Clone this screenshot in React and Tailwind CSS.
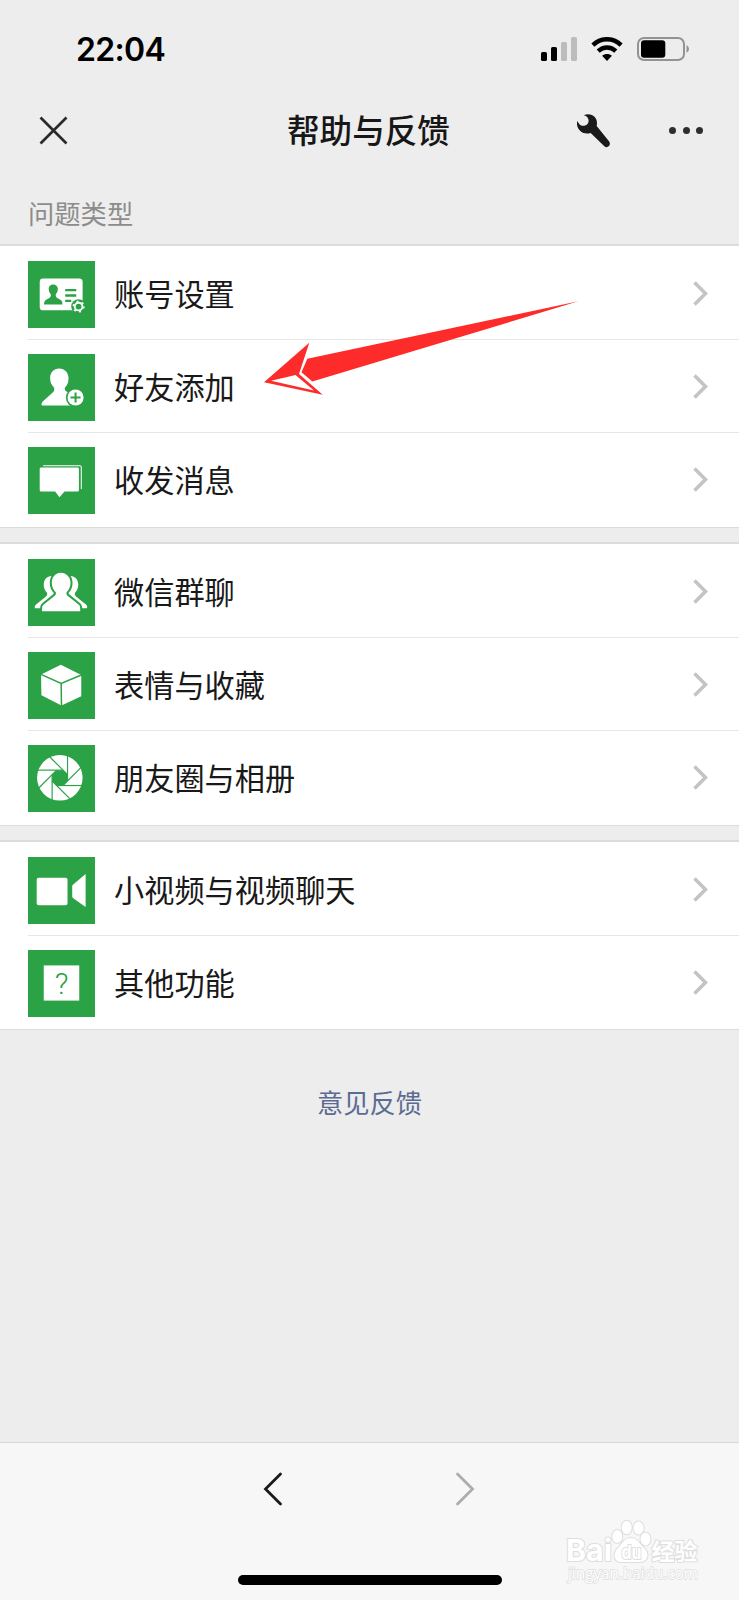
import React from 'react'

const GREEN = '#2ba245'

const AccountIcon = () => (
  <>
    <rect x="35" y="52" width="128" height="95" rx="10" fill="#fff" />
    <path d="M75 70c-9 0-14 7-13 16 1 7 3 10 6 13 1 6-1 10-7 13-8 4-13 6-13 18h55c0-12-5-14-13-18-6-3-8-7-7-13 3-3 5-6 6-13 1-9-5-16-14-16z" fill={GREEN} />
    <path d="M111 87h33M111 103h33M111 119h18" stroke={GREEN} strokeWidth="7" />
    <circle cx="151" cy="136" r="22" fill={GREEN} />
    <circle cx="151" cy="136" r="11.500" fill="none" stroke="#fff" strokeWidth="5.500" />
    <circle cx="151" cy="136" r="15.500" fill="none" stroke="#fff" strokeWidth="5" strokeDasharray="6 10.230" />
  </>
)

const AddFriendIcon = () => (
  <>
    <path d="M93 43c-17 0-27 13-27 29 0 14 5 22 12 29 1 7 0 11-5 15l-29 26c-4 4-5 12-1 12h96v-30l-24-12c-5-3-6-6-5-11 7-7 11-15 11-29 0-16-11-29-28-29z" fill="#fff" />
    <circle cx="142" cy="130" r="29" fill={GREEN} />
    <circle cx="142" cy="130" r="24" fill="#fff" />
    <path d="M142 115v30M127 130h30" stroke={GREEN} strokeWidth="6" />
  </>
)

const MessageIcon = () => (
  <>
    <path d="M45 56h110q4 0 4 4v65" fill="none" stroke="#fff" strokeWidth="3" />
    <path d="M39 61h109q4 0 4 4v64q0 4-4 4h-39l-15 17-13-17H39q-4 0-4-4V65q0-4 4-4z" fill="#fff" />
  </>
)

const GroupIcon = () => (
  <>
    <path d="M71 51c-15 0-24 11-24 26 0 10 4 18 9 23 3 6 1 9-5 14l-27 22c-4 3-5 11-2 11h58V51z" fill="#fff" />
    <path d="M126 51c15 0 24 11 24 26 0 10-4 18-9 23-3 6-1 9 5 14l27 22c4 3 5 11 2 11h-58V51z" fill="#fff" />
    <path d="M98 41c-16 0-27 13-27 30 0 13 5 22 12 28 1 5 0 8-5 12l-31 25c-5 4-5 8-5 20h114c0-12 0-16-5-20l-31-25c-5-4-6-7-5-12 7-6 12-15 12-28 0-17-13-30-29-30z" fill="#fff" stroke={GREEN} strokeWidth="12" paintOrder="stroke" />
  </>
)

const BoxIcon = () => (
  <>
    <path d="M98 38l61 31v63l-59 28-60-31-1-62z" fill="#fff" />
    <path d="M37 66l62 28 62-26M99 94l1 68" fill="none" stroke={GREEN} strokeWidth="4.500" />
  </>
)

const ShutterIcon = () => (
  <g transform="translate(95 98)">
    <circle r="68" fill="#fff" />
    <path d="M-9.500 -23H9.500L23 -9.500V9.500L9.500 23H-9.500L-23 9.500V-9.500Z" fill={GREEN} />
    {[0, 45, 90, 135, 180, 225, 270, 315].map((deg) => (
      <path key={deg} d="M-68 -23H9.500" stroke={GREEN} strokeWidth="3.500" transform={`rotate(${deg})`} />
    ))}
  </g>
)

const VideoIcon = () => (
  <>
    <rect x="26" y="62" width="92" height="82" rx="6" fill="#fff" />
    <path d="M172 51v98l-37-26q-3-2-3-5V87q0-3 3-5z" fill="#fff" />
  </>
)

const OtherIcon = () => (
  <>
    <rect x="47" y="46" width="106" height="105" fill="#fff" />
    <text x="100" y="131" textAnchor="middle" fontSize="90" fontWeight="300" fontFamily="Roboto, sans-serif" fill={GREEN}>?</text>
  </>
)

const groups = [
  {
    className: 'h-[284px] border-t-2',
    items: [
      { label: '账号设置', Icon: AccountIcon },
      { label: '好友添加', Icon: AddFriendIcon },
      { label: '收发消息', Icon: MessageIcon },
    ],
  },
  {
    className: 'mt-[14px] h-[284px] border-t-2',
    items: [
      { label: '微信群聊', Icon: GroupIcon },
      { label: '表情与收藏', Icon: BoxIcon },
      { label: '朋友圈与相册', Icon: ShutterIcon },
    ],
  },
  {
    className: 'mt-[14px] h-[190px] border-t-2',
    items: [
      { label: '小视频与视频聊天', Icon: VideoIcon },
      { label: '其他功能', Icon: OtherIcon },
    ],
  },
]

const StatusBar = () => (
  <div className="flex h-[98px] items-center justify-between pl-[76px] pr-[49px]">
    <span className="pt-px font-['Inter',sans-serif] text-[32px] font-semibold leading-none tracking-[-0.700px] text-black">22:04</span>
    <div className="flex items-center">
      <svg className="h-6 w-[37px]" viewBox="0 0 37 24">
        <rect x="0" y="15" width="6" height="9" rx="1.600" />
        <rect x="10" y="10" width="6" height="14" rx="1.600" />
        <rect x="20" y="5" width="6" height="19" rx="1.600" fill="#bcbcbc" />
        <rect x="30" y="0" width="6" height="24" rx="1.600" fill="#bcbcbc" />
      </svg>
      <svg className="ml-[13px] h-6 w-8" viewBox="0 0 32 24" fill="none" stroke="#000" strokeWidth="4.400">
        <path d="M1.900 8.100C10 .2 22 .2 30.100 8.100" />
        <path d="M7.200 14.200C12.400 9.300 19.600 9.300 24.800 14.200" />
        <path d="M11.100 18.800c2.600-2.500 7.200-2.500 9.800 0L16 24z" fill="#000" stroke="none" />
      </svg>
      <svg className="ml-[14px] h-6 w-[53px]" viewBox="0 0 53 24">
        <rect x="1" y="1" width="46" height="22" rx="6" fill="none" stroke="#939393" strokeWidth="2" />
        <rect x="4" y="3.300" width="24.300" height="17.500" rx="3.200" />
        <path d="M49.500 8q2.500 1.500 2.500 4t-2.500 4z" fill="#939393" />
      </svg>
    </div>
  </div>
)

const NavBar = () => (
  <div className="flex h-[66px] items-center pl-[39px] pr-[36px]">
    <svg className="h-[30px] w-[30px]" viewBox="0 0 30 30" stroke="#2a2a2a" strokeWidth="2.700">
      <path d="M1.500 1.500l26 26M27.500 1.500l-26 26" />
    </svg>
    <h1 className="-mt-[3px] ml-[218px] whitespace-nowrap text-[32.600px] font-medium leading-none text-[#171717]">帮助与反馈</h1>
    <svg className="ml-auto h-[34px] w-[34px]" viewBox="0 0 102 102" fill="#1a1a1a">
      <path d="M20 4C32-2 46 1 54 10c6 8 7 16 5 26l37 46c4 6 3 10 0 14-4 4-9 5-14 1L41 57c-12 3-22 2-31-6C1 43-2 31 1 21c2 4 5 9 9 12 8 5 17 2 22-4 5-7 3-15-2-20-3-3-6-4-10-5z" />
    </svg>
    <div className="-mt-px ml-[58px] flex gap-[6.500px]">
      <i className="size-[7px] rounded-full bg-[#2e2e2e]" />
      <i className="size-[7px] rounded-full bg-[#2e2e2e]" />
      <i className="size-[7px] rounded-full bg-[#2e2e2e]" />
    </div>
  </div>
)

const Row = ({ label, Icon, first }) => (
  <div className={`ml-7 flex h-[93px] items-start pr-[31px] ${first ? 'pt-[15px]' : 'border-t border-[#e6e6e6] pt-[14px]'}`}>
    <svg className="h-[67px] w-[67px] shrink-0 bg-[#2ba245]" viewBox="0 0 200 200">
      <Icon />
    </svg>
    <span className="-mt-[1.500px] ml-[19px] h-[67px] text-[30.200px] leading-[67px] text-[#191919]">{label}</span>
    <svg className="ml-auto mt-5 h-[26px] w-4" viewBox="0 0 16 26" fill="none" stroke="#c4c4c6" strokeWidth="3.600">
      <path d="M2.500 1.500L13.500 12.500 2.500 23.500" />
    </svg>
  </div>
)

// red pointer laid over the second row
const Pointer = () => (
  <svg className="pointer-events-none absolute left-[260px] top-[295px] h-[105px] w-[325px]" viewBox="260 295 325 105">
    <path d="M578.300 301.300L307.300 358.700L301.500 372.300L312.300 381.500Z" fill="#fd2b2a" />
    <path d="M264 382.300L309.300 342.700L299 374L322.700 394.700Z" fill="#fd2b2a" />
    <path d="M271 380.700L295.500 375L314 390.500Z" fill="#fff" />
  </svg>
)

const Watermark = () => (
  <svg className="absolute left-[562px] top-[1515px] h-[75px] w-[142px]" viewBox="562 1515 142 75" fill="#fff" stroke="#dedede" strokeWidth="2" paintOrder="stroke">
    <text x="566" y="1561" fontSize="30" fontWeight="700" fontFamily="Inter, sans-serif" textLength="46" lengthAdjust="spacingAndGlyphs">Bai</text>
    <ellipse cx="617.300" cy="1536.500" rx="5" ry="6.500" />
    <ellipse cx="626.700" cy="1527.500" rx="5" ry="6.800" />
    <ellipse cx="638.500" cy="1528" rx="5" ry="6.500" />
    <ellipse cx="645.500" cy="1539" rx="5" ry="6.500" />
    <path d="M631 1538c-6 0-9 5-12 9-7 6-6 15 3 15h17c10 0 11-9 4-15-4-4-6-9-12-9z" />
    <text x="621.500" y="1558.500" fontSize="19" fontWeight="700" fontFamily="Inter, sans-serif" textLength="20" lengthAdjust="spacingAndGlyphs">du</text>
    <text x="651.500" y="1560" fontSize="23" fontWeight="700" fontFamily="'Noto Sans CJK SC', sans-serif" textLength="46">经验</text>
    <text x="568" y="1578.500" fontSize="16" fontFamily="'Open Sans', sans-serif" strokeWidth="1.500" textLength="130" lengthAdjust="spacingAndGlyphs">jingyan.baidu.com</text>
  </svg>
)

const App = () => {
  return (
    <div className="relative flex h-[1600px] w-[739px] flex-col overflow-hidden bg-[#ededed] font-['Noto_Sans_CJK_SC',sans-serif]">
      <StatusBar />
      <NavBar />

      <div className="h-20 pl-[28px] pt-[36px] text-[26.300px] leading-[26px] text-[#8c8c8c]">问题类型</div>

      {groups.map((group, index) => (
        <div key={index} className={`shrink-0 border-b border-[#dcdcdc] bg-white ${group.className}`}>
          {group.items.map((item, i) => (
            <Row key={item.label} label={item.label} Icon={item.Icon} first={i === 0} />
          ))}
        </div>
      ))}

      <a className="mt-[59px] text-center text-[26.300px] leading-[26px] text-[#5b6b92]">意见反馈</a>

      {/* Bottom toolbar */}
      <div className="mt-auto flex h-[158px] flex-col items-center justify-between border-t border-[#d8d8d8] bg-[#f7f7f7] pb-[15px] pt-[29px]">
        <div className="-ml-px flex gap-[172px]">
          <svg className="h-[34px] w-5" viewBox="0 0 20 34" fill="none" stroke="#1a1a1a" strokeWidth="2.800" strokeLinecap="round">
            <path d="M17.500 2L2.500 17l15 15" />
          </svg>
          <svg className="h-[34px] w-5" viewBox="0 0 20 34" fill="none" stroke="#adadad" strokeWidth="2.800" strokeLinecap="round">
            <path d="M2.500 2l15 15-15 15" />
          </svg>
        </div>
        <div className="h-[10px] w-[264px] rounded-full bg-black" />
      </div>

      <Pointer />
      <Watermark />
    </div>
  )
}

export default App
